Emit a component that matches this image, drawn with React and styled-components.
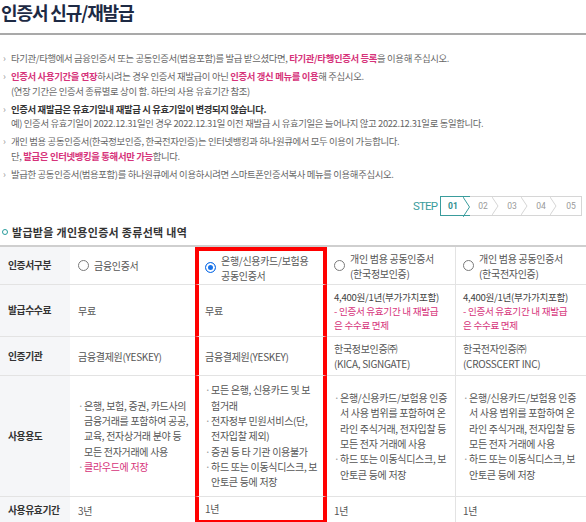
import React from 'react';
import styled, { createGlobalStyle } from 'styled-components';

const GlobalStyle = createGlobalStyle`
  html, body {
    margin: 0;
    padding: 0;
    background: #ffffff;
  }
  body {
    font-family: "Noto Sans CJK KR", "Noto Sans", sans-serif;
    color: #666;
  }
`;

const Page = styled.div`
  width: 586px;
  height: 522px;
  overflow: hidden;
`;

const Title = styled.h1`
  margin: 0;
  padding-left: 1px;
  height: 33px;
  line-height: 24px;
  font-size: 18px;
  font-weight: 700;
  letter-spacing: -1.1px;
  color: #1d2a44;
  border-bottom: 2px solid #a9a9a9;
`;

const Notices = styled.ul`
  list-style: none;
  margin: 16px 0 0;
  padding: 0;
  display: flex;
  flex-direction: column;
  gap: 3.5px;
`;

const Notice = styled.li`
  display: flex;
  font-size: 9.4px;
  line-height: 14.5px;
  letter-spacing: -0.35px;
  color: #666;
`;

const Marker = styled.span`
  flex: none;
  width: 11px;
  padding-left: 3px;
  box-sizing: border-box;
  color: #999;
`;

const Em = styled.strong`
  color: #d6337a;
  font-weight: 700;
`;

const Strong = styled.strong`
  color: #333;
  font-weight: 700;
`;

// 단계 표시
const StepRow = styled.div`
  display: flex;
  justify-content: flex-end;
  align-items: center;
  margin-top: 15px;
  padding-right: 4px;
`;

const StepLabel = styled.span`
  font-family: Roboto, sans-serif;
  font-size: 11.5px;
  letter-spacing: -0.9px;
  color: #3a9c9c;
  margin-right: 3px;
`;

const Steps = styled.ol`
  display: flex;
  margin: 0;
  padding: 0;
  list-style: none;
  height: 18px;
  border: 1px solid #d6d6d6;
`;

const Step = styled.li`
  display: flex;
  align-items: stretch;
  margin: ${p => (p.$active ? '-1px 0 -1px -1px' : '0')};
  border: ${p => (p.$active ? '1px solid #3a9c9c' : 'none')};
  border-right: none;
`;

const StepNum = styled.span`
  display: flex;
  align-items: center;
  justify-content: center;
  box-sizing: border-box;
  width: ${p => p.$w}px;
  padding-left: ${p => (p.$active ? 2 : 4)}px;
  font-family: Roboto, sans-serif;
  font-size: 8.5px;
  font-weight: ${p => (p.$active ? 700 : 400)};
  color: ${p => (p.$active ? '#2f8f8f' : '#9a9a9a')};
`;

const Chevron = ({ active }) => (
  <svg width="7" height={active ? 20 : 18} viewBox={active ? '0 0 7 20' : '0 0 7 18'}>
    <polyline
      points={active ? '0,0 6.5,10 0,20' : '0,0 6,9 0,18'}
      fill="none"
      stroke={active ? '#3a9c9c' : '#d6d6d6'}
      strokeWidth="1"
    />
  </svg>
);

const Heading = styled.h2`
  display: flex;
  align-items: center;
  gap: 4px;
  margin: 9px 0 0;
  padding-left: 2px;
  height: 14px;
  font-size: 11px;
  font-weight: 700;
  letter-spacing: 0.3px;
  color: #333;
`;

const Ring = styled.span`
  width: 4px;
  height: 4px;
  border: 1.5px solid #2a9d9d;
  border-radius: 50%;
`;

// 표
const Table = styled.div`
  display: grid;
  grid-template-columns: 70px 125px 132px 128px 131px;
  grid-template-rows: 38px 52px 39px 121px 27px;
  margin-top: 6px;
  border-top: 2px solid #cfcfcf;
`;

const Cell = styled.div`
  display: flex;
  align-items: center;
  box-sizing: border-box;
  padding-left: ${p => p.$pad}px;
  padding-right: 2px;
  border-bottom: 1px solid ${p => (p.$lastRow ? '#c4c4c4' : '#e3e3e3')};
  border-left: ${p => (p.$divider ? '1px solid #e3e3e3' : 'none')};
  background: ${p => (p.$label ? '#f5f6f8' : '#ffffff')};
  font-size: ${p => (p.$label ? 9.8 : 10)}px;
  font-weight: ${p => (p.$label ? 700 : 400)};
  color: ${p => (p.$label ? '#333' : '#555')};
  letter-spacing: ${p => (p.$label ? -0.4 : -0.3)}px;
  line-height: 15px;
  white-space: nowrap;

  ${p =>
    p.$selected &&
    `
    border-left: 4px solid #ff0000;
    border-right: 4px solid #ff0000;
  `}
  ${p => p.$selected && p.$top && 'border-top: 4px solid #ff0000;'}
  ${p => p.$selected && p.$bottom && 'border-bottom: 4px solid #ff0000;'}
`;

const RadioLabel = styled.label`
  display: flex;
  align-items: center;
  gap: 5px;
`;

const Radio = styled.span`
  flex: none;
  width: 11px;
  height: 11px;
  box-sizing: border-box;
  border-radius: 50%;
  border: 1px solid ${p => (p.$checked ? '#1a73e8' : '#7a7a7a')};
  background: ${p => (p.$checked ? '#1a73e8' : '#fff')};
  box-shadow: ${p => (p.$checked ? 'inset 0 0 0 2px #fff' : 'none')};
`;

const Fee = styled.div`
  font-size: 9.6px;
  line-height: 14px;
  color: #444;
`;

const Pink = styled.span`
  color: #d6337a;
`;

const Usage = styled.ul`
  list-style: none;
  margin: 0;
  padding: 0;
  line-height: 15.3px;
`;

const UsageItem = styled.li`
  display: flex;
  color: ${p => (p.$pink ? '#d6337a' : '#555')};
`;

const Dot = styled.span`
  flex: none;
  width: 6px;
  color: #999;
`;

const lines = arr => arr.map((l, i) => (
  <React.Fragment key={i}>
    {i > 0 && <br />}
    {l}
  </React.Fragment>
));

const kinds = [
  { name: ['금융인증서'] },
  { name: ['은행/신용카드/보험용', '공동인증서'], checked: true },
  { name: ['개인 범용 공동인증서', '(한국정보인증)'] },
  { name: ['개인 범용 공동인증서', '(한국전자인증)'] },
];

const paidFee = (
  <Fee>
    4,400원/1년(부가가치포함)
    <br />
    <Pink>- 인증서 유효기간 내 재발급</Pink>
    <br />
    <Pink>은 수수료 면제</Pink>
  </Fee>
);

const generalUsage = [
  { text: ['은행/신용카드/보험용 인증', '서 사용 범위를 포함하여 온', '라인 주식거래, 전자입찰 등', '모든 전자 거래에 사용'] },
  { text: ['하드 또는 이동식디스크, 보', '안토큰 등에 저장'] },
];

const usages = [
  [
    { text: ['은행, 보험, 증권, 카드사의', '금융거래를 포함하여 공공,', '교육, 전자상거래 분야 등', '모든 전자거래에 사용'] },
    { text: ['클라우드에 저장'], pink: true },
  ],
  [
    { text: ['모든 은행, 신용카드 및 보', '험거래'] },
    { text: ['전자정부 민원서비스(단,', '전자입찰 제외)'] },
    { text: ['증권 등 타 기관 이용불가'] },
    { text: ['하드 또는 이동식디스크, 보', '안토큰 등에 저장'] },
  ],
  generalUsage,
  generalUsage,
];

const rows = [
  {
    label: '인증서구분',
    cells: kinds.map(k => (
      <RadioLabel>
        <Radio $checked={k.checked} />
        <span>{lines(k.name)}</span>
      </RadioLabel>
    )),
  },
  { label: '발급수수료', cells: ['무료', '무료', paidFee, paidFee] },
  {
    label: '인증기관',
    cells: [
      '금융결제원(YESKEY)',
      '금융결제원(YESKEY)',
      <span>{lines(['한국정보인증㈜', '(KICA, SIGNGATE)'])}</span>,
      <span>{lines(['한국전자인증㈜', '(CROSSCERT INC)'])}</span>,
    ],
  },
  {
    label: '사용용도',
    cells: usages.map(items => (
      <Usage>
        {items.map((it, i) => (
          <UsageItem key={i} $pink={it.pink}>
            <Dot>·</Dot>
            <span>{lines(it.text)}</span>
          </UsageItem>
        ))}
      </Usage>
    )),
  },
  { label: '사용유효기간', cells: ['3년', '1년', '1년', '1년'] },
];

const pads = [8, 6, 7, 7];

const steps = ['01', '02', '03', '04', '05'];

const App = () => {
  return (
    <Page>
      <GlobalStyle />
      <Title>인증서 신규/재발급</Title>

      <Notices>
        <Notice>
          <Marker>›</Marker>
          <div>
            타기관/타행에서 금융인증서 또는 공동인증서(범용포함)를 발급 받으셨다면, <Em>타기관/타행인증서 등록</Em>을 이용해 주십시오.
          </div>
        </Notice>
        <Notice>
          <Marker>›</Marker>
          <div>
            <Em>인증서 사용기간을 연장</Em>하시려는 경우 인증서 재발급이 아닌 <Em>인증서 갱신 메뉴를 이용</Em>해 주십시오.
            <br />
            (연장 기간은 인증서 종류별로 상이 함. 하단의 사용 유효기간 참조)
          </div>
        </Notice>
        <Notice>
          <Marker>›</Marker>
          <div>
            <Strong>인증서 재발급은 유효기일내 재발급 시 유효기일이 변경되지 않습니다.</Strong>
            <br />
            예) 인증서 유효기일이 2022.12.31일인 경우 2022.12.31일 이전 재발급 시 유효기일은 늘어나지 않고 2022.12.31일로 동일합니다.
          </div>
        </Notice>
        <Notice>
          <Marker>›</Marker>
          <div>
            개인 범용 공동인증서(한국정보인증, 한국전자인증)는 인터넷뱅킹과 하나원큐에서 모두 이용이 가능합니다.
            <br />
            단, <Em>발급은 인터넷뱅킹을 통해서만 가능</Em>합니다.
          </div>
        </Notice>
        <Notice>
          <Marker>›</Marker>
          <div>발급한 공동인증서(범용포함)를 하나원큐에서 이용하시려면 스마트폰인증서복사 메뉴를 이용해주십시오.</div>
        </Notice>
      </Notices>

      <StepRow>
        <StepLabel>STEP</StepLabel>
        <Steps>
          {steps.map((s, i) => (
            <Step key={s} $active={i === 0}>
              <StepNum $active={i === 0} $w={i === 4 ? 24 : 22}>{s}</StepNum>
              {i < 4 && <Chevron active={i === 0} />}
            </Step>
          ))}
        </Steps>
      </StepRow>

      <Heading>
        <Ring />
        발급받을 개인용인증서 종류선택 내역
      </Heading>

      <Table>
        {rows.map((row, r) => (
          <React.Fragment key={row.label}>
            <Cell $label $pad={8} $lastRow={r === rows.length - 1}>
              {row.label}
            </Cell>
            {row.cells.map((c, i) => (
              <Cell
                key={i}
                $pad={pads[i]}
                $selected={i === 1}
                $top={r === 0}
                $bottom={r === rows.length - 1}
                $divider={i === 3}
                $lastRow={r === rows.length - 1}
              >
                {c}
              </Cell>
            ))}
          </React.Fragment>
        ))}
      </Table>
    </Page>
  );
};

export default App;
